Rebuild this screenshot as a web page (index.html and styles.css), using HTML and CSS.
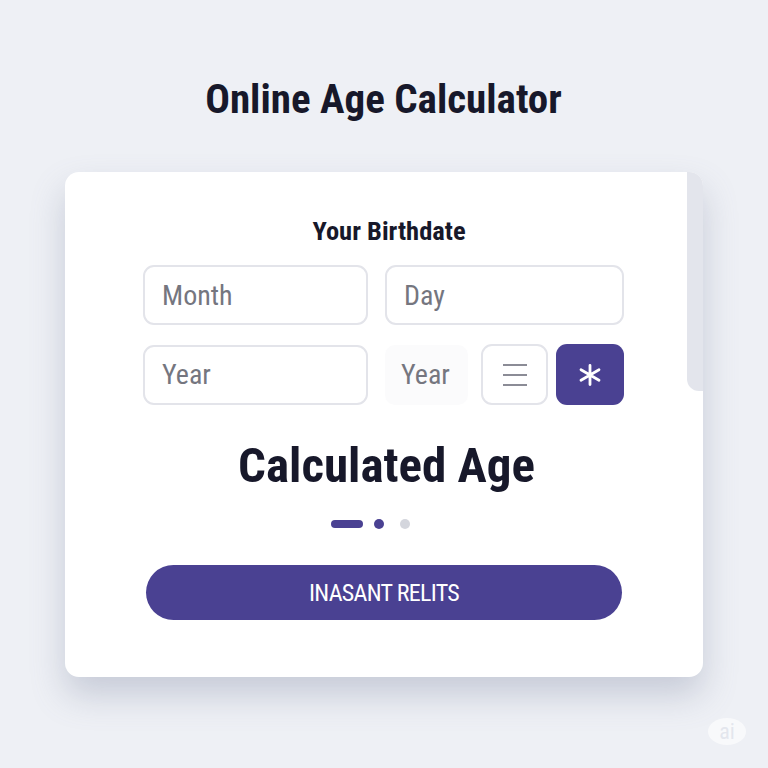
FILE: index.html
```html
<!DOCTYPE html>
<html lang="en">
<head>
<meta charset="utf-8">
<title>Online Age Calculator</title>
<link rel="stylesheet" href="styles.css">
</head>
<body>
<main class="page">
  <h1 class="title">Online Age Calculator</h1>
  <section class="card">
    <div class="scrollbar"></div>
    <h2 class="label">Your Birthdate</h2>
    <div class="row">
      <div class="field w-month">Month</div>
      <div class="field w-day">Day</div>
    </div>
    <div class="row row-2">
      <div class="field w-month">Year</div>
      <div class="plain">Year</div>
      <div class="icon-btn menu">
        <svg width="24" height="22" viewBox="0 0 24 22"><path d="M0 1h24M0 11h24M0 21h24" stroke="#8b8c96" stroke-width="2" fill="none"/></svg>
      </div>
      <div class="icon-btn star">
        <svg width="24" height="22" viewBox="0 0 24 22"><path d="M12 1.5v19M3 5.8l18 10.4M3 16.2l18-10.4" stroke="#fff" stroke-width="2.8" fill="none" stroke-linecap="round"/></svg>
      </div>
    </div>
    <h2 class="result">Calculated Age</h2>
    <div class="dots"><span class="pill"></span><span class="dot"></span><span class="dot off"></span></div>
    <button class="cta">INASANT RELITS</button>
  </section>
  <div class="badge">ai</div>
</main>
</body>
</html>
```
FILE: styles.css
```css
* { box-sizing: border-box; }
html, body { margin: 0; padding: 0; }
body {
  width: 768px;
  height: 768px;
  background: #eef0f5;
  font-family: "Roboto Condensed", "Roboto", sans-serif;
  font-stretch: 75%;
  color: #17182a;
  overflow: hidden;
}
.page {
  position: relative;
  height: 768px;
  display: flex;
  flex-direction: column;
  align-items: center;
}
.title {
  margin: 77px 0 0 -1px;
  height: 44px;
  line-height: 44px;
  font-size: 41px;
  font-weight: 700;
}
.card {
  position: relative;
  margin: 51px 0 0 0;
  width: 638px;
  height: 505px;
  background: #fff;
  border-radius: 14px;
  box-shadow: 0 18px 34px rgba(110, 120, 150, 0.3);
  display: flex;
  flex-direction: column;
  align-items: center;
  padding-top: 44px;
}
.scrollbar {
  position: absolute;
  top: 0;
  right: 0;
  width: 16px;
  height: 219px;
  background: #e3e5ec;
  border-radius: 0 14px 0 12px;
}
.label {
  margin: 0 0 0 10px;
  height: 30px;
  line-height: 30px;
  font-size: 26.5px;
  font-weight: 700;
}
.row {
  display: flex;
  align-items: center;
  width: 481px;
  margin: 19px 0 0 -1px;
  gap: 17px;
}
.row + .row { margin-top: 19px; }
.row-2 { gap: 0; }
.row > * { flex-shrink: 0; }
.field {
  height: 60px;
  border: 2px solid #e3e4ea;
  border-radius: 11px;
  display: flex;
  align-items: center;
  padding-left: 17px;
  font-size: 28px;
  color: #75767f;
}
.w-month { width: 225px; }
.w-day { width: 239px; }
.plain {
  width: 83px;
  height: 60px;
  margin-left: 17px;
  border-radius: 10px;
  background: #fbfbfc;
  display: flex;
  align-items: center;
  padding-left: 16px;
  font-size: 28px;
  color: #75767f;
}
.icon-btn {
  height: 61px;
  border-radius: 11px;
  display: flex;
  align-items: center;
  justify-content: center;
}
.menu {
  width: 67px;
  margin-left: 13px;
  border: 2px solid #e3e4ea;
}
.star {
  width: 68px;
  margin-left: 8px;
  background: #4a4192;
}
.result {
  margin: 31px 0 0 5px;
  height: 60px;
  line-height: 60px;
  font-size: 49px;
  font-weight: 700;
}
.dots {
  margin: 23px 0 0 -27px;
  display: flex;
  align-items: center;
  height: 10px;
}
.pill {
  width: 32px;
  height: 8px;
  border-radius: 4px;
  background: #4a4192;
}
.dot {
  width: 10px;
  height: 10px;
  border-radius: 50%;
  background: #4a4192;
  margin-left: 11px;
}
.dot.off {
  background: #d4d6dd;
  margin-left: 16px;
}
.cta {
  margin: 36px 0 0 0;
  width: 476px;
  height: 55px;
  border: none;
  border-radius: 28px;
  background: #4a4192;
  color: #fff;
  font-family: inherit;
  font-stretch: 75%;
  font-size: 24px;
  letter-spacing: -0.7px;
  font-weight: 400;
  padding: 0;
}
.badge {
  position: absolute;
  left: 708px;
  top: 718px;
  width: 38px;
  height: 27px;
  border-radius: 50%;
  background: rgba(255, 255, 255, 0.6);
  color: rgba(225, 228, 236, 0.9);
  font-size: 22px;
  line-height: 27px;
  text-align: center;
}
```
